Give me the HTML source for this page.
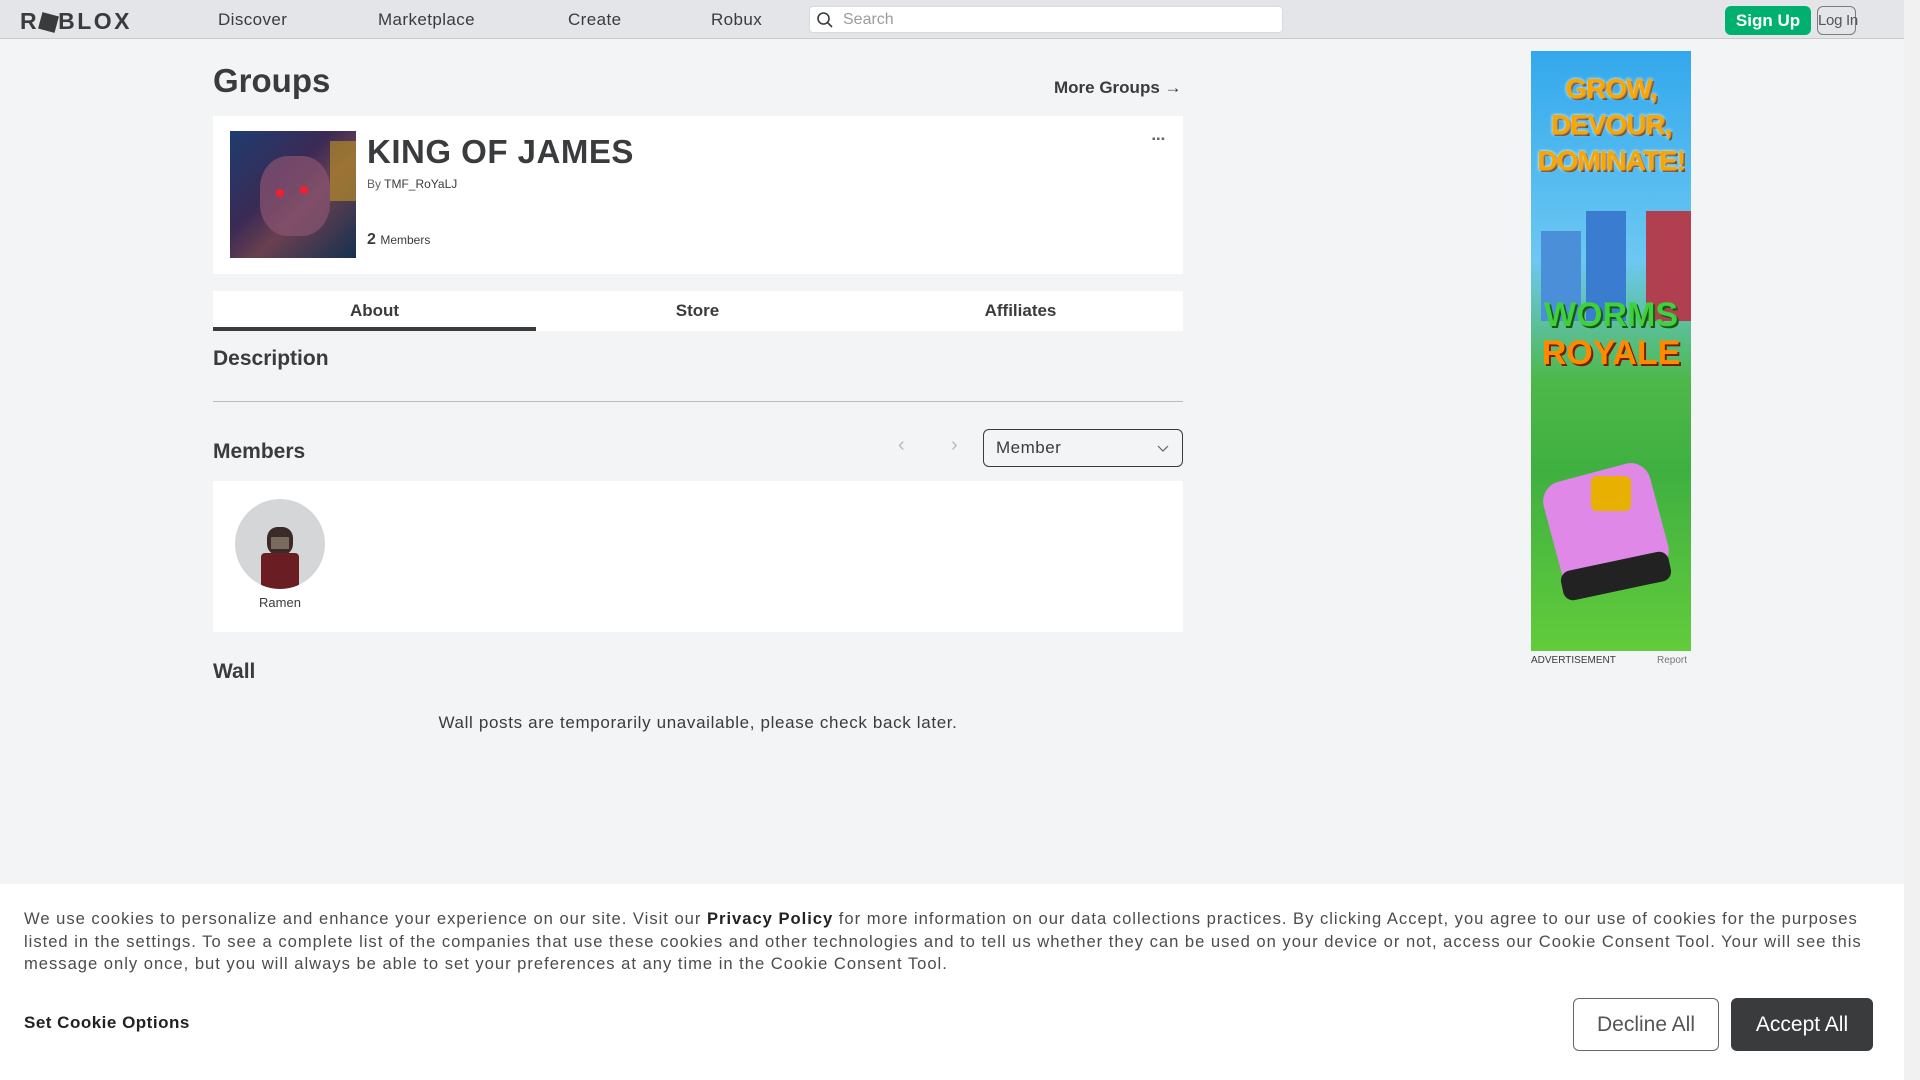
<!DOCTYPE html>
<html><head><meta charset="utf-8"><style>
*{box-sizing:border-box;margin:0;padding:0}
body{width:1920px;height:1080px;overflow:hidden;background:#f2f4f5;font-family:"Liberation Sans",sans-serif;color:#393b3d;position:relative}
.a{position:absolute}
.nav{left:0;top:0;width:1904px;height:39px;background:#e3e5e8;border-bottom:1px solid #c8cacc}
.nav .l{font-size:17px;top:10px;color:#393b3d;letter-spacing:.4px}
.sb{left:1904px;top:0;width:16px;height:1080px;background:#f1f1f1}
.card{background:#fff}
.ck{left:0;top:884px;width:1904px;height:196px;background:#fff}
</style></head><body>
<div class="a nav">
 <div class="a" style="left:20px;top:8px;font-size:23px;font-weight:bold;letter-spacing:2.5px;color:#393b3d">R<span style="display:inline-block;width:17px;height:17px;background:#393b3d;transform:rotate(15deg);vertical-align:-2px;margin:0 1px"></span>BLOX</div>
 <div class="a l" style="left:218px">Discover</div>
 <div class="a l" style="left:378px">Marketplace</div>
 <div class="a l" style="left:568px">Create</div>
 <div class="a l" style="left:711px">Robux</div>
 <div class="a" style="left:809px;top:6px;width:474px;height:27px;background:#fff;border-radius:4px;border:1px solid #d8dadc">
  <svg class="a" style="left:6px;top:4px" width="18" height="18" viewBox="0 0 18 18"><circle cx="7.5" cy="7.5" r="5.5" fill="none" stroke="#393b3d" stroke-width="1.6"/><path d="M11.5 11.5L16 16" stroke="#393b3d" stroke-width="1.6"/></svg>
  <div class="a" style="left:33px;top:4px;font-size:16px;color:#9a9c9e">Search</div>
 </div>
 <div class="a" style="left:1725px;top:6px;width:86px;height:29px;background:#00b06f;border-radius:6px;color:#fff;font-weight:bold;font-size:17px;text-align:center;line-height:29px">Sign Up</div>
 <div class="a" style="left:1817px;top:6px;width:39px;height:29px;border:1px solid #7a7c7e;border-radius:6px;font-size:15px;text-align:center;line-height:27px;color:#555;white-space:nowrap;letter-spacing:-.3px">Log In</div>
</div>
<div class="a sb"></div>

<div class="a" style="left:213px;top:62px;font-size:33px;font-weight:bold">Groups</div>
<div class="a" style="left:1054px;top:78px;font-size:17px;font-weight:bold;color:#393b3d">More Groups →</div>

<div class="a card" style="left:213px;top:116px;width:970px;height:158px"></div>
<div class="a" style="left:230px;top:131px;width:126px;height:127px;background:linear-gradient(135deg,#1d3d70,#3a2a55 40%,#6a4050 60%,#15304f);overflow:hidden">
 <div class="a" style="left:30px;top:25px;width:70px;height:80px;border-radius:40%;background:#8a5470;opacity:.7"></div>
 <div class="a" style="left:46px;top:58px;width:8px;height:8px;border-radius:50%;background:#f02030"></div>
 <div class="a" style="left:70px;top:55px;width:8px;height:8px;border-radius:50%;background:#f02030"></div>
 <div class="a" style="left:100px;top:10px;width:26px;height:60px;background:#b08a2a;opacity:.7"></div>
</div>
<div class="a" style="left:367px;top:133px;font-size:33px;font-weight:bold;color:#393b3d;letter-spacing:.5px">KING OF JAMES</div>
<div class="a" style="left:367px;top:177px;font-size:12px;color:#606264">By <span style="color:#393b3d">TMF_RoYaLJ</span></div>
<div class="a" style="left:367px;top:231px;font-size:16px;font-weight:bold">2 <span style="font-size:12px;font-weight:normal">Members</span></div>
<div class="a" style="left:1152px;top:134px;font-size:10px;letter-spacing:1px;color:#606264">▪▪▪</div>

<div class="a card" style="left:213px;top:291px;width:970px;height:40px"></div>
<div class="a" style="left:213px;top:327px;width:323px;height:4px;background:#393b3d"></div>
<div class="a" style="left:213px;top:301px;width:323px;text-align:center;font-size:17px;font-weight:bold">About</div>
<div class="a" style="left:536px;top:301px;width:323px;text-align:center;font-size:17px;font-weight:bold">Store</div>
<div class="a" style="left:859px;top:301px;width:323px;text-align:center;font-size:17px;font-weight:bold">Affiliates</div>

<div class="a" style="left:213px;top:347px;font-size:21px;font-weight:bold">Description</div>
<div class="a" style="left:213px;top:401px;width:970px;height:1px;background:#b8babc"></div>

<div class="a" style="left:213px;top:440px;font-size:21px;font-weight:bold">Members</div>
<div class="a" style="left:898px;top:434px;font-size:20px;color:#b8babc">‹</div>
<div class="a" style="left:951px;top:434px;font-size:20px;color:#b8babc">›</div>
<div class="a" style="left:983px;top:429px;width:200px;height:38px;border:1px solid #393b3d;border-radius:6px">
 <div class="a" style="left:12px;top:8px;font-size:17px;letter-spacing:.5px">Member</div>
 <svg class="a" style="left:173px;top:15px" width="12" height="8"><path d="M1 1L6 6L11 1" fill="none" stroke="#606264" stroke-width="1.2"/></svg>
</div>

<div class="a card" style="left:213px;top:481px;width:970px;height:151px"></div>
<div class="a" style="left:235px;top:499px;width:90px;height:90px;border-radius:50%;background:#d4d6d8;overflow:hidden">
 <div class="a" style="left:32px;top:28px;width:26px;height:28px;border-radius:40%;background:#3a2a28"></div>
 <div class="a" style="left:36px;top:38px;width:18px;height:12px;background:#7a6a60"></div>
 <div class="a" style="left:26px;top:54px;width:38px;height:36px;background:#6a1e24;border-radius:4px"></div>
</div>
<div class="a" style="left:235px;top:595px;width:90px;text-align:center;font-size:13px;color:#393b3d">Ramen</div>

<div class="a" style="left:213px;top:660px;font-size:21px;font-weight:bold">Wall</div>
<div class="a" style="left:213px;top:713px;width:970px;text-align:center;font-size:17px;color:#393b3d;letter-spacing:.65px">Wall posts are temporarily unavailable, please check back later.</div>

<div class="a" style="left:1531px;top:51px;width:160px;height:600px;background:linear-gradient(180deg,#33a8ec 0%,#6cc8f2 35%,#4db84a 55%,#3fb040 70%,#62cc3c 100%);overflow:hidden">
 <div class="a" style="left:0;top:20px;width:160px;text-align:center;font-size:28px;font-weight:bold;color:#f7a800;line-height:36px;text-shadow:0 0 3px #fff,2px 2px 0 #7a3b00;letter-spacing:-1px">GROW,<br>DEVOUR,<br>DOMINATE!</div>
 <div class="a" style="left:10px;top:180px;width:40px;height:90px;background:#4b8fd8"></div>
 <div class="a" style="left:55px;top:160px;width:40px;height:110px;background:#3a7cd0"></div>
 <div class="a" style="left:115px;top:160px;width:45px;height:110px;background:#b04050"></div>
 <div class="a" style="left:0;top:245px;width:160px;text-align:center;font-size:34px;font-weight:bold;color:#3fd040;line-height:38px;text-shadow:2px 2px 0 #1a5a10">WORMS</div>
 <div class="a" style="left:0;top:283px;width:160px;text-align:center;font-size:34px;font-weight:bold;color:#ff8a00;line-height:38px;text-shadow:2px 2px 0 #7a2000">ROYALE</div>
 <div class="a" style="left:20px;top:420px;width:110px;height:110px;border-radius:20px;background:#e088e8;transform:rotate(-15deg)"></div>
 <div class="a" style="left:60px;top:425px;width:40px;height:35px;background:#e8b000;border-radius:6px"></div>
 <div class="a" style="left:30px;top:510px;width:110px;height:30px;background:#222;border-radius:10px;transform:rotate(-12deg)"></div>
</div>
<div class="a" style="left:1531px;top:655px;font-size:10px;color:#393b3d">ADVERTISEMENT</div>
<div class="a" style="left:1657px;top:655px;font-size:10px;color:#757779">Report</div>

<div class="a ck">
 <div class="a" style="left:24px;top:24px;font-size:16.6px;line-height:22.5px;color:#4a4c4e;white-space:nowrap;letter-spacing:.98px">We use cookies to personalize and enhance your experience on our site. Visit our <b style="color:#222">Privacy Policy</b> for more information on our data collections practices. By clicking Accept, you agree to our use of cookies for the purposes<br>listed in the settings. To see a complete list of the companies that use these cookies and other technologies and to tell us whether they can be used on your device or not, access our Cookie Consent Tool. Your will see this<br>message only once, but you will always be able to set your preferences at any time in the Cookie Consent Tool.</div>
 <div class="a" style="left:24px;top:129px;font-size:17px;font-weight:bold;color:#222;letter-spacing:.5px">Set Cookie Options</div>
 <div class="a" style="left:1573px;top:114px;width:146px;height:53px;border:1px solid #666;border-radius:6px;text-align:center;line-height:51px;font-size:21px;color:#555">Decline All</div>
 <div class="a" style="left:1731px;top:114px;width:142px;height:53px;background:#393b3d;border-radius:6px;text-align:center;line-height:53px;font-size:21px;color:#fff">Accept All</div>
</div>
</body></html>
